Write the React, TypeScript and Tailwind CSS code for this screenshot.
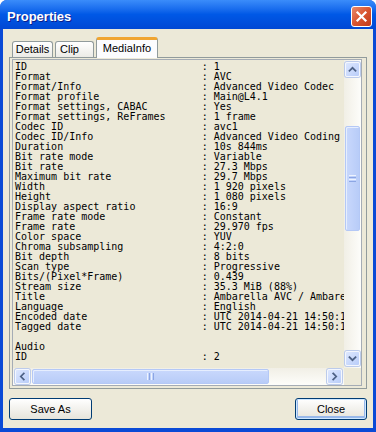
import React from "react";

const rows: [string, string][] = [
  ["ID", "1"],
  ["Format", "AVC"],
  ["Format/Info", "Advanced Video Codec"],
  ["Format profile", "Main@L4.1"],
  ["Format settings, CABAC", "Yes"],
  ["Format settings, ReFrames", "1 frame"],
  ["Codec ID", "avc1"],
  ["Codec ID/Info", "Advanced Video Coding"],
  ["Duration", "10s 844ms"],
  ["Bit rate mode", "Variable"],
  ["Bit rate", "27.3 Mbps"],
  ["Maximum bit rate", "29.7 Mbps"],
  ["Width", "1 920 pixels"],
  ["Height", "1 080 pixels"],
  ["Display aspect ratio", "16:9"],
  ["Frame rate mode", "Constant"],
  ["Frame rate", "29.970 fps"],
  ["Color space", "YUV"],
  ["Chroma subsampling", "4:2:0"],
  ["Bit depth", "8 bits"],
  ["Scan type", "Progressive"],
  ["Bits/(Pixel*Frame)", "0.439"],
  ["Stream size", "35.3 MiB (88%)"],
  ["Title", "Ambarella AVC / Ambare"],
  ["Language", "English"],
  ["Encoded date", "UTC 2014-04-21 14:50:1"],
  ["Tagged date", "UTC 2014-04-21 14:50:1"],
];

type Dir = "up" | "down" | "left" | "right";

function Chevron({ dir }: { dir: Dir }) {
  const d = {
    up: "M4 9 L7.5 5.5 L11 9",
    down: "M4 6 L7.5 9.5 L11 6",
    left: "M9 4 L5.5 7.5 L9 11",
    right: "M6 4 L9.5 7.5 L6 11",
  }[dir];
  return (
    <svg width="15" height="15" viewBox="0 0 15 15">
      <path d={d} fill="none" stroke="#4D6185" strokeWidth="2" strokeLinecap="square" />
    </svg>
  );
}

function SBtn({ dir }: { dir: Dir }) {
  return (
    <div className="w-[15px] h-[15px] shrink-0 rounded-[2px] border border-[#F4F7FE] bg-gradient-to-br from-[#DDE7FE] to-[#B9CDF9] flex items-center justify-center shadow-[0_0_0_1px_#BCCBEB]">
      <Chevron dir={dir} />
    </div>
  );
}

export default function App() {
  const mono = { fontFamily: '"DejaVu Sans Mono", "Liberation Mono", monospace' };
  const ui = { fontFamily: '"Liberation Sans", Arial, sans-serif' };
  return (
    <div className="w-[376px] h-[432px] bg-[#0A4AD6] rounded-t-[7px] flex flex-col overflow-hidden" style={ui}>
      {/* Title bar */}
      <div className="h-[29px] shrink-0 flex items-center pt-[4px] pl-[7px] pr-[4px] bg-gradient-to-b from-[#3A8CFA] via-[#0058E6] to-[#0048D4]">
        <span className="flex-1 text-white font-bold text-[13px] [text-shadow:1px_1px_0_#0A1E8C]">Properties</span>
        <div className="w-[21px] h-[21px] rounded-[3px] border border-white bg-gradient-to-br from-[#E8896A] via-[#D9542F] to-[#C13A1A] flex items-center justify-center">
          <svg width="13" height="13" viewBox="0 0 13 13">
            <path d="M2.5 2.5 L10.5 10.5 M10.5 2.5 L2.5 10.5" stroke="white" strokeWidth="2.2" strokeLinecap="square" />
          </svg>
        </div>
      </div>

      {/* Client area */}
      <div className="flex-1 mx-[3px] mb-[4px] bg-[#ECE9D8] flex flex-col px-[6px] pt-[8px]">
        {/* Tabs */}
        <div className="h-[20px] flex items-end pl-[3px] gap-[2px] text-[11px] text-black">
          <div className="w-[41px] h-[16px] rounded-t-[3px] border border-b-0 border-[#919B9C] bg-gradient-to-b from-white to-[#ECEBE6] flex items-center justify-center leading-none">Details</div>
          <div className="w-[39px] h-[16px] rounded-t-[3px] border border-b-0 border-[#919B9C] bg-gradient-to-b from-white to-[#ECEBE6] flex items-center pl-[4px] leading-none">Clip</div>
          <div className="relative w-[62px] h-[21px] -mb-[1px] rounded-t-[3px] border-x border-[#919B9C] border-t-[3px] border-t-[#F0A531] bg-[#FCFCFE] flex items-center justify-center leading-none z-10 pb-[2px]">MediaInfo</div>
        </div>

        {/* Tab panel */}
        <div className="h-[332px] border border-[#919B9C] bg-[#ECE9D8] pl-[2px] pr-[4px] pt-[1px] pb-[2px] flex">
          <div className="flex-1 min-w-0 border border-[#A5ACB5] flex flex-col">
            <div className="flex-1 flex min-h-0 min-w-0">
              <div className="flex-1 min-w-0 w-0 overflow-hidden pl-[2px] pt-[2px] text-[10px] leading-[10px] text-black whitespace-pre" style={mono}>
                {rows.map(([k, v]) => (
                  <div key={k} className="h-[10px]">{k.padEnd(31) + ": " + v}</div>
                ))}
                <div className="h-[10px]"> </div>
                <div className="h-[10px]">Audio</div>
                <div className="h-[10px]">{"ID".padEnd(31) + ": 2"}</div>
              </div>
              {/* Vertical scrollbar */}
              <div className="w-[17px] shrink-0 bg-gradient-to-r from-[#F1EFE6] to-[#FDFDFA] flex flex-col items-center py-[2px]">
                <SBtn dir="up" />
                <div className="flex-1 w-full flex flex-col items-center">
                  <div className="h-[49px]" />
                  <div className="w-[15px] h-[105px] rounded-[2px] border border-[#B4C8F6] bg-gradient-to-r from-[#C9D8FC] to-[#B8CCF8] flex flex-col items-center justify-center gap-[1px] shadow-[inset_1px_1px_0_#E6EEFE]">
                    <div className="w-[7px] h-[1px] bg-[#EEF3FE]" />
                    <div className="w-[7px] h-[1px] bg-[#8CA6E4]" />
                    <div className="w-[7px] h-[1px] bg-[#EEF3FE]" />
                    <div className="w-[7px] h-[1px] bg-[#8CA6E4]" />
                  </div>
                </div>
                <SBtn dir="down" />
              </div>
            </div>
            {/* Horizontal scrollbar */}
            <div className="h-[17px] shrink-0 flex">
              <div className="flex-1 min-w-0 bg-gradient-to-b from-[#F1EFE6] to-[#FDFDFA] flex items-center px-[2px]">
                <SBtn dir="left" />
                <div className="ml-[2px] w-[237px] h-[15px] rounded-[2px] border border-[#B4C8F6] bg-gradient-to-b from-[#C9D8FC] to-[#B8CCF8] flex items-center justify-center gap-[1px] shadow-[inset_1px_1px_0_#E6EEFE]">
                  <div className="w-[1px] h-[7px] bg-[#EEF3FE]" />
                  <div className="w-[1px] h-[7px] bg-[#8CA6E4]" />
                  <div className="w-[1px] h-[7px] bg-[#EEF3FE]" />
                  <div className="w-[1px] h-[7px] bg-[#8CA6E4]" />
                </div>
                <div className="flex-1" />
                <SBtn dir="right" />
              </div>
              <div className="w-[17px] shrink-0 bg-[#ECE9D8]" />
            </div>
          </div>
        </div>

        {/* Buttons */}
        <div className="mt-[9px] flex justify-between text-[11px] text-black">
          <div className="w-[83px] h-[22px] rounded-[3px] border border-[#003C74] bg-gradient-to-b from-white to-[#E6E4DB] flex items-center justify-center">Save As</div>
          <div className="w-[72px] h-[22px] rounded-[3px] border border-[#003C74] bg-gradient-to-b from-white to-[#E6E4DB] flex items-center justify-center shadow-[inset_0_0_0_1px_#CEE7FF,inset_0_-1px_0_2px_#98B8EA]">Close</div>
        </div>
      </div>
    </div>
  );
}
